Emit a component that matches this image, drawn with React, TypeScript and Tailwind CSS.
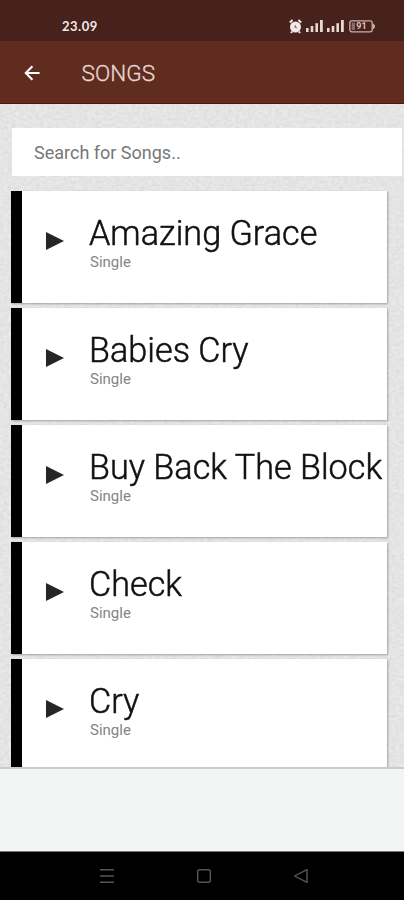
import { FC } from "react";

type SongCardProps = {
  title: string;
  type: string;
};

const songs: SongCardProps[] = [
  { title: "Amazing Grace", type: "Single" },
  { title: "Babies Cry", type: "Single" },
  { title: "Buy Back The Block", type: "Single" },
  { title: "Check", type: "Single" },
  { title: "Cry", type: "Single" },
];

const SignalIcon: FC = () => (
  <svg className="w-[17px] h-3" viewBox="0 0 17 12" fill="#e6d8d3">
    <rect x="0" y="8" width="2.6" height="4" />
    <rect x="4.7" y="6" width="2.6" height="6" />
    <rect x="9.4" y="3.2" width="2.6" height="8.8" />
    <rect x="14" y="0" width="2.8" height="12" />
  </svg>
);

const StatusBar: FC = () => (
  <div className="h-[41px] shrink-0 bg-[#47211b] flex items-start justify-between pl-[62px] pr-[28px] pt-[19px]">
    <span className="text-[13px] leading-[15px] font-bold text-[#f3e8e4] font-['Lato',sans-serif] tracking-[0.5px]">
      23.09
    </span>
    <div className="flex items-start">
      <svg className="w-[13px] h-[15px]" viewBox="0 0 13 15">
        <path d="M.8 3.4 3.6 1M12.2 3.4 9.4 1M3 12.5 2 14M10 12.5l1 1.5" stroke="#f3e8e4" strokeWidth="2" />
        <circle cx="6.5" cy="8" r="5.5" fill="#f3e8e4" />
        <path d="M6.2 6.2v2.2l1.6.4" fill="none" stroke="#6b4a42" strokeWidth="1" />
      </svg>
      <div className="flex gap-1 ml-[4px] mt-px">
        <SignalIcon />
        <SignalIcon />
      </div>
      <div className="relative w-[27px] h-[13px] ml-[5px] mt-px">
        <svg className="w-[27px] h-[13px]" viewBox="0 0 27 13" fill="none">
          <rect x="0.8" y="0.8" width="22.4" height="11" rx="2" stroke="#cbb0a8" strokeWidth="1.3" />
          <path d="M24 3.4c1.6.8 2 1.8 2 2.9s-.4 2.1-2 2.9z" fill="#cbb0a8" />
          <rect x="2.6" y="2.6" width="3.4" height="7.4" fill="#8a6a62" />
        </svg>
        <span className="absolute left-[6px] top-0 w-[13px] text-center text-[9px] leading-[13px] font-bold text-[#d8c4bd]">
          91
        </span>
      </div>
    </div>
  </div>
);

const Header: FC = () => (
  <header className="h-[63px] shrink-0 bg-[#602c1f] border-b border-[#5a0f0c] flex items-center pl-6">
    <svg className="w-4 h-4 mt-px" viewBox="0 0 16 16" fill="none" stroke="#fff" strokeWidth="2.1">
      <path d="M15.6 8H2M8.4 1.3 1.8 8l6.6 6.7" />
    </svg>
    <h1 className="ml-[41.5px] mt-[3px] text-[22.5px] leading-none text-[#e5d8d4] font-light tracking-[0.1px] [-webkit-text-stroke:0.3px_#e5d8d4]">
      SONGS
    </h1>
  </header>
);

const SongCard: FC<SongCardProps> = ({ title, type }) => (
  <li className="h-28 shrink-0 flex bg-white border-l-[11px] border-black shadow-[1px_1px_2px_rgba(0,0,0,0.3)]">
    <svg className="w-[18px] h-[18px] ml-6 mt-[41px] shrink-0" viewBox="0 0 18 18" fill="#262626">
      <path d="M0 0v18L18 9z" />
    </svg>
    <div className="ml-[25px] pt-[22px]">
      <h2 className="text-[35px] leading-[41px] font-light text-[#111] whitespace-nowrap origin-left scale-x-[0.977] [-webkit-text-stroke:0.5px_#111]">
        {title}
      </h2>
      <p className="ml-px text-[15px] leading-4 text-[#858585]">{type}</p>
    </div>
  </li>
);

const PaperBackground: FC = () => (
  <svg className="absolute inset-0 w-full h-full">
    <filter id="paper" x="0" y="0" width="100%" height="100%" colorInterpolationFilters="sRGB">
      <feTurbulence type="fractalNoise" baseFrequency="0.25 0.35" numOctaves="2" seed="4" />
      <feColorMatrix values="0.09 0 0 0 0.85  0.09 0 0 0 0.85  0.09 0 0 0 0.848  0 0 0 0 1" />
    </filter>
    <rect width="100%" height="100%" filter="url(#paper)" />
  </svg>
);

const NavBar: FC = () => (
  <nav className="h-[49px] shrink-0 bg-black border-t border-[#777] flex items-center justify-center gap-[81px] pl-1">
    <svg className="w-4 h-4" viewBox="0 0 16 16" stroke="#565656" strokeWidth="1.5">
      <path d="M1 1.7h14M1 8h14M1 14.3h14" />
    </svg>
    <svg className="w-4 h-4" viewBox="0 0 16 16" fill="none" stroke="#565656" strokeWidth="1.4">
      <rect x="1.7" y="1.7" width="12.6" height="12.6" rx="2" />
    </svg>
    <svg className="w-4 h-4" viewBox="0 0 16 16" fill="none" stroke="#565656" strokeWidth="1.4" strokeLinejoin="round">
      <path d="M1.6 8 14 1.6v12.8z" />
    </svg>
  </nav>
);

export default function App() {
  return (
    <div className="w-[404px] h-[900px] flex flex-col overflow-hidden font-['Roboto',sans-serif]">
      <StatusBar />
      <Header />
      <main className="relative flex-1 min-h-0 overflow-hidden bg-[#e4e4e4]">
        <PaperBackground />
        <div className="relative pt-6 pl-[11px]">
          <input
            className="block ml-px w-[390px] h-12 bg-white px-[22px] text-[18px] text-[#777] placeholder:text-[#777] outline-none"
            type="text"
            placeholder="Search for Songs.."
          />
          <ul className="mt-[15px] w-[376px] flex flex-col gap-[5px]">
            {songs.map((song) => (
              <SongCard key={song.title} {...song} />
            ))}
          </ul>
        </div>
      </main>
      <div className="h-[84px] shrink-0 bg-[#f1f6f5] border-t-2 border-[#c8cccb]" />
      <NavBar />
    </div>
  );
}
